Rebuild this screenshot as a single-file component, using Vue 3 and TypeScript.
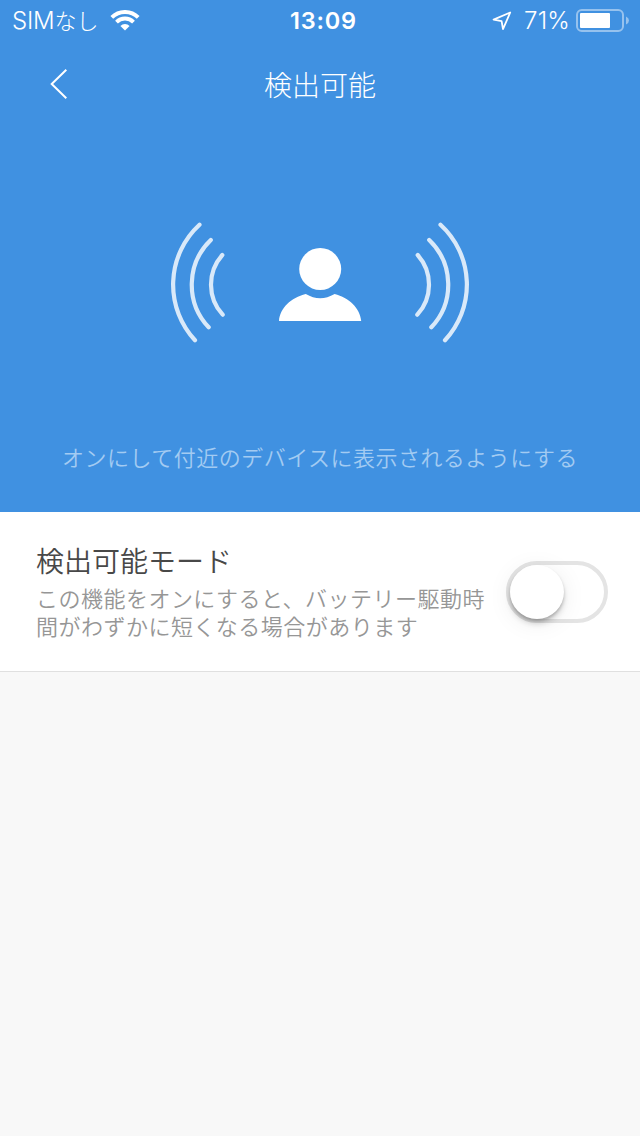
<script setup lang="ts">
import { ref } from 'vue'

const discoverable = ref(false)
const batteryLevel = 71

const waves: string[] = [
  'M199.5 224.7A81.5 81.5 0 0 0 195 340.3',
  'M210.8 240A62 62 0 0 0 208.7 327.3',
  'M222.3 255A44.5 44.5 0 0 0 222.7 314.7',
]
</script>

<template>
  <div class="screen">
    <section class="hero">
      <header class="status">
        <div class="side left">
          <span class="carrier"><span class="latin">SIM</span>なし</span>
          <svg class="wifi" width="30" height="22" viewBox="0 0 30 22">
            <g fill="none" stroke="#fff" stroke-width="3.9">
              <path d="M1.8 7.4A18.7 18.7 0 0 1 28.2 7.4" />
              <path d="M6.5 12.1A12 12 0 0 1 23.5 12.1" />
            </g>
            <path d="M10.4 16A6.5 6.5 0 0 1 19.6 16L15 20.6Z" fill="#fff" />
          </svg>
        </div>
        <span class="clock">13:09</span>
        <div class="side right">
          <svg class="location" width="20" height="20" viewBox="0 0 20 20">
            <path d="M18.2 1.5L1.6 8.7L9.6 10.1L11 18.2Z" fill="none" stroke="#fff" stroke-width="1.8" stroke-linejoin="round" />
          </svg>
          <span class="percent">{{ batteryLevel }}%</span>
          <svg class="battery" width="54" height="24" viewBox="0 0 54 24">
            <rect x="1" y="1" width="46" height="21" rx="4.8" fill="none" stroke="#fff" stroke-opacity=".45" stroke-width="2" />
            <rect x="4" y="4" width="30" height="15" rx="1" fill="#fff" />
            <path d="M50 7.5Q53 8.8 53 11.5T50 15.5Z" fill="#fff" fill-opacity=".45" />
          </svg>
        </div>
      </header>
      <nav class="nav">
        <svg class="back" width="20" height="34" viewBox="0 0 20 34">
          <path d="M17.3 2.8L2.7 17L17.3 31.2" fill="none" stroke="#fff" stroke-width="2" />
        </svg>
        <h1>検出可能</h1>
      </nav>
      <svg class="figure" width="300" height="122" viewBox="170 222 300 122">
        <g class="waves">
          <path v-for="d in waves" :key="d" :d="d" />
        </g>
        <g class="waves" transform="translate(640 0) scale(-1 1)">
          <path v-for="d in waves" :key="d" :d="d" />
        </g>
        <circle cx="320.2" cy="269" r="21" fill="#fff" />
        <path d="M279 321C280 308 291 298 305.8 294.1Q320.1 302.5 334.6 294.1C349 298 360 308 361.2 321Z" fill="#fff" />
      </svg>
      <p class="hint">オンにして付近のデバイスに表示されるようにする</p>
    </section>
    <section class="setting">
      <div class="copy">
        <h2>検出可能モード</h2>
        <p>この機能をオンにすると、バッテリー駆動時<br />間がわずかに短くなる場合があります</p>
      </div>
      <button class="switch" :class="{ on: discoverable }" role="switch" :aria-checked="discoverable" @click="discoverable = !discoverable">
        <span class="knob"></span>
      </button>
    </section>
  </div>
</template>

<style>
body { margin: 0; background: #f8f8f8; }
</style>

<style scoped>
.screen {
  width: 640px;
  height: 1136px;
  background: #f8f8f8;
  font-family: "Noto Sans CJK JP", sans-serif;
  font-weight: 300;
  overflow: hidden;
}
.hero {
  height: 512px;
  background: #4091e1;
  color: #fff;
  display: flex;
  flex-direction: column;
  align-items: center;
}
.status {
  width: 640px;
  height: 40px;
  display: grid;
  grid-template-columns: 1fr auto 1fr;
  grid-template-rows: 40px;
  align-items: center;
  font-size: 22px;
  line-height: 40px;
}
.side { display: flex; align-items: center; height: 40px; }
.left { padding-left: 12px; }
.right { justify-content: flex-end; padding-right: 10px; }
.carrier { width: 98px; white-space: nowrap; }
.latin { font: 350 24px/40px Inter, sans-serif; letter-spacing: -0.2px; }
.clock { font: 600 23.5px/40px Inter, sans-serif; letter-spacing: 0.8px; padding: 2px 0 0 7px; }
.location { margin: 1px 12px 0 0; }
.percent { font: 350 24px/40px Inter, sans-serif; letter-spacing: 0.2px; margin-right: 6px; padding-top: 2px; }
.battery,
.wifi { margin-top: 2px; }
.nav {
  width: 640px;
  height: 88px;
  display: grid;
  grid-template-columns: 50px 1fr 50px;
  align-items: center;
}
.back { margin-left: 49px; }
h1 {
  margin: 0;
  text-align: center;
  font-size: 28px;
  font-weight: 300;
  line-height: 88px;
}
.figure { margin-top: 94px; }
.waves path {
  fill: none;
  stroke: #d9e9f9;
  stroke-width: 4.2;
  stroke-linecap: round;
}
.hint {
  margin: 96px 0 0;
  font-size: 22px;
  font-weight: 350;
  line-height: 32px;
  letter-spacing: 0.48px;
  color: #a3cbf2;
  white-space: nowrap;
}
.setting {
  height: 160px;
  box-sizing: border-box;
  padding: 0 32px 0 36px;
  border-bottom: 1px solid #e0e0e0;
  background: #fff;
  display: flex;
  align-items: center;
  justify-content: space-between;
}
.copy { padding-bottom: 5px; }
h2 {
  margin: 0;
  font-size: 28px;
  line-height: 40px;
  font-weight: 350;
  color: #484848;
}
.copy p {
  margin: 3px 0 0;
  font-size: 22px;
  font-weight: 350;
  line-height: 28px;
  letter-spacing: 0.48px;
  color: #969696;
  white-space: nowrap;
}
.switch {
  box-sizing: border-box;
  width: 102px;
  height: 62px;
  padding: 0;
  border: 4px solid #e4e4e4;
  border-radius: 31px;
  background: #fff;
  display: flex;
}
.switch.on { justify-content: flex-end; background: #4091e1; border-color: #4091e1; }
.knob {
  width: 54px;
  height: 54px;
  border-radius: 50%;
  background: #fff;
  box-shadow: 0 5px 6px -1px rgba(0, 0, 0, .2), 0 4px 24px rgba(0, 0, 0, .08), 0 2px 3px rgba(0, 0, 0, .16);
}
</style>
